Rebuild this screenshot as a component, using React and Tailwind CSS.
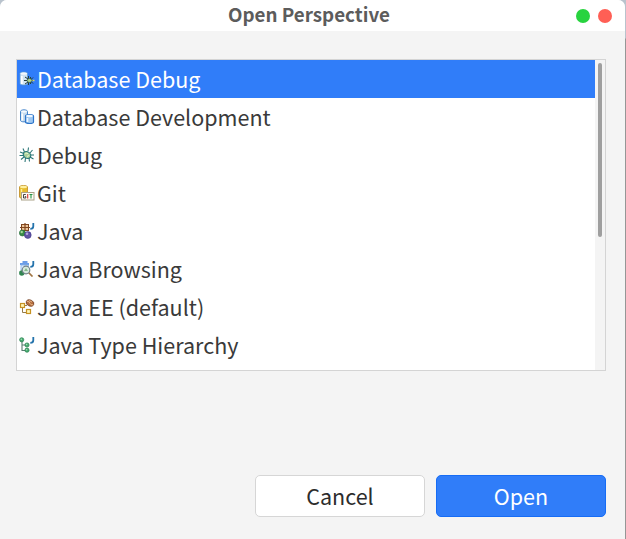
const DbDebug = () => (
  <svg width="16" height="16" viewBox="0 0 16 16">
    <path d="M1 2.500C1 .5 8.500 .5 8.500 2.500V12.500C8.500 14.500 1 14.500 1 12.500Z" fill="#cfe3f2" stroke="#5c9bd6" strokeWidth=".8" />
    <ellipse cx="4.800" cy="2.600" rx="3.300" ry="1.200" fill="#f4f9ff" />
    <path d="M2.800 5v8" stroke="#fff" strokeWidth="1.800" />
    <path d="M6 6l3 2M5 9.500h10M6 13l3-2M9.500 5v9M11.500 6v7M12.500 8l1.500-1.500M12.500 11l1.500 1.500" stroke="#243c3c" strokeWidth="1" />
    <ellipse cx="10.500" cy="9.500" rx="2.500" ry="1.900" fill="#b6d78c" stroke="#27524c" strokeWidth=".7" />
    <path d="M13.500 9.500h2" stroke="#d5d36c" strokeWidth="1.400" />
  </svg>
);

const DbDevelopment = () => (
  <svg width="16" height="16" viewBox="0 0 16 16">
    <path d="M1.500 2.500C1.500 .3 8.500 .3 8.500 2.500V11.500C8.500 13.300 1.500 13.300 1.500 11.500Z" fill="#c9dcee" stroke="#4484cb" />
    <ellipse cx="5" cy="2.600" rx="3" ry="1.100" fill="#f5faff" />
    <path d="M3.200 4.500v7" stroke="#fff" strokeWidth="1.500" />
    <path d="M6.500 7C6.500 5 14.500 5 14.500 7V13C14.500 15 6.500 15 6.500 13Z" fill="#9fc8f1" stroke="#2e76cb" strokeWidth="1.200" />
    <ellipse cx="10.500" cy="7" rx="3.300" ry="1.200" fill="#f1f7ff" />
    <path d="M8.500 9v4" stroke="#eef6ff" strokeWidth="1.600" />
  </svg>
);

const Bug = () => (
  <svg width="16" height="16" viewBox="0 0 16 16">
    <path d="M4 1.500l1.500 3.500M9.500 .5L9 4M1 5l4 1.500M13.500 3L11 6M.5 8.500h4M11 8h4M2 12.500L5 10M6 15l.5-4M10.500 14.500L10 11M14.500 12L11 10" fill="none" stroke="#2d7778" strokeWidth="1.100" />
    <ellipse cx="8" cy="8" rx="4" ry="3.200" transform="rotate(35 8 8)" fill="#a9cf9d" stroke="#28777b" strokeWidth="1.200" />
    <path d="M6 7l2-1 1 1M8 9.500l2-1" stroke="#e6f3c8" strokeWidth="1" fill="none" />
  </svg>
);

const Git = () => (
  <svg width="16" height="16" viewBox="0 0 16 16">
    <path d="M.5 2C.5 0 8.500 0 8.500 2V12C8.500 13.800 .5 13.800 .5 12Z" fill="#e7bd2f" stroke="#be8a20" strokeWidth=".8" />
    <ellipse cx="4.500" cy="2" rx="3.500" ry="1.200" fill="#fff0a0" />
    <path d="M2.500 4v8" stroke="#fff094" strokeWidth="1.500" />
    <rect x="2.500" y="7.500" width="12.500" height="7.500" fill="#fffdf5" stroke="#aaa188" />
    <path d="M6.800 9.500H4.500v3.500h2.300v-1.500h-1" fill="none" stroke="#333" strokeWidth=".9" />
    <path d="M8.700 9v4.500" stroke="#dc3030" strokeWidth="1.100" />
    <path d="M10.500 9.500h3M12 9.500v4" stroke="#269448" strokeWidth="1.100" />
  </svg>
);

const JavaMark = () => (
  <path d="M14.300 0v3.200q0 2.600-3 2.600" fill="none" stroke="#2473ac" strokeWidth="1.800" />
);

const Java = () => (
  <svg width="16" height="16" viewBox="0 0 16 16">
    <rect x="2.500" y="1.500" width="7" height="6" fill="#eec69b" stroke="#80461f" />
    <path d="M1 4.500h10M6 0v8" stroke="#80461f" strokeWidth="1.200" />
    <circle cx="3.400" cy="10" r="3" fill="#388b45" stroke="#236837" strokeWidth=".6" />
    <circle cx="2.700" cy="9" r="1.200" fill="#a7d79c" />
    <circle cx="8.800" cy="12" r="3.400" fill="#6154a4" stroke="#40378a" strokeWidth=".6" />
    <circle cx="8" cy="10.800" r="1.300" fill="#b3a7dc" />
    <JavaMark />
  </svg>
);

const JavaBrowsing = () => (
  <svg width="16" height="16" viewBox="0 0 16 16">
    <path d="M1 3h9M3.500 1h5" stroke="#3d7de0" strokeWidth="1.700" />
    <path d="M2 4h7.500v5H2Z" fill="#dcecff" stroke="#85b2e8" strokeWidth=".8" />
    <circle cx="2.800" cy="12" r="2.700" fill="#318651" />
    <path d="M9.500 11.500l4 4" stroke="#a07442" strokeWidth="1.700" />
    <circle cx="7" cy="9" r="3.800" fill="#d7eadf" stroke="#748389" strokeWidth="1.200" />
    <path d="M5 10l2-3 2 3Z" fill="#88bb8c" />
    <JavaMark />
  </svg>
);

const JavaEE = () => (
  <svg width="16" height="16" viewBox="0 0 16 16">
    <path d="M3.500 9v4.500h4M5.500 6.500H8" fill="none" stroke="#967b48" />
    <rect x="1.500" y="4.500" width="4" height="4" fill="#fff5b6" stroke="#c69223" strokeWidth="1.200" />
    <rect x="7.500" y="10.500" width="4" height="4" fill="#fff5b6" stroke="#c69223" strokeWidth="1.200" />
    <ellipse cx="11" cy="4" rx="4" ry="3" transform="rotate(25 11 4)" fill="#b36c3d" stroke="#744022" strokeWidth=".7" />
    <path d="M8 2.300q2.500 0 3 2t3 1.500M10 1.500l3 1.500" fill="none" stroke="#edbd8d" strokeWidth=".9" />
  </svg>
);

const JavaHierarchy = () => (
  <svg width="16" height="16" viewBox="0 0 16 16">
    <path d="M3 4v9.500h5M3 8h5" fill="none" stroke="#597b70" strokeWidth="1.100" />
    <g fill="#45aa70" stroke="#26804e" strokeWidth=".7">
      <circle cx="2.700" cy="2.800" r="2.100" />
      <circle cx="8" cy="8" r="2.100" />
      <circle cx="8" cy="13.200" r="2.100" />
    </g>
    <g fill="#a4dfb6">
      <circle cx="2.300" cy="2.300" r=".8" />
      <circle cx="7.600" cy="7.500" r=".8" />
      <circle cx="7.600" cy="12.700" r=".8" />
    </g>
    <JavaMark />
  </svg>
);

const perspectives = [
  ["Database Debug", DbDebug],
  ["Database Development", DbDevelopment],
  ["Debug", Bug],
  ["Git", Git],
  ["Java", Java],
  ["Java Browsing", JavaBrowsing],
  ["Java EE (default)", JavaEE],
  ["Java Type Hierarchy", JavaHierarchy],
];

export default function App() {
  return (
    <div className="h-[539px] w-[626px] overflow-hidden bg-linear-to-b from-[#b9c3cd] from-[38px] to-[#969696] to-[39px] font-['Noto_Sans_CJK_SC',sans-serif]">
      <div className="flex h-full w-[625px] flex-col overflow-hidden rounded-t-[7px] bg-[#f4f4f4]">
        <header className="grid h-[31px] shrink-0 grid-cols-[1fr_auto_1fr] items-center bg-white">
          <span />
          <h1 className="mr-[7px] pb-[3px] text-[18.8px] leading-[28px] font-bold text-[#5c5c5c]">Open Perspective</h1>
          <div className="flex justify-end gap-2 pr-[13px]">
            <span className="size-[14px] rounded-full bg-[#28d33f]" />
            <span className="size-[14px] rounded-full bg-[#ff5f55]" />
          </div>
        </header>
        <main className="flex flex-1 flex-col justify-between pt-7 pr-[19px] pb-[22px] pl-4">
          <div className="flex h-[312px] border border-[#d4d4d4] bg-white">
            <ul className="min-w-0 flex-1 overflow-hidden">
              {perspectives.map(([name, Icon], i) => (
                <li key={name} className={`flex h-[38px] items-start gap-px pl-px text-[21.53px] leading-[38px] ${i === 0 ? "bg-[#307df9] text-white" : "text-[#3a3a3a]"}`}>
                  <span className="mt-[11px] flex size-[18px] items-start justify-center"><Icon /></span>
                  <span className="whitespace-nowrap">{name}</span>
                </li>
              ))}
            </ul>
            <div className="flex w-[10px] justify-center bg-[#f4f4f4] pt-[3px]">
              <span className="h-[174px] w-1 rounded-full bg-[#9f9f9f]" />
            </div>
          </div>
          <div className="flex justify-end gap-[11px]">
            <button className="h-[42px] w-[170px] rounded-[5px] border border-[#d6d6d6] bg-white text-[21.53px] leading-[40px] text-[#2c2c2c]">Cancel</button>
            <button className="h-[42px] w-[170px] rounded-[5px] border border-[#166cf5] bg-[#307df9] text-[21.53px] leading-[40px] text-white">Open</button>
          </div>
        </main>
      </div>
    </div>
  );
}
